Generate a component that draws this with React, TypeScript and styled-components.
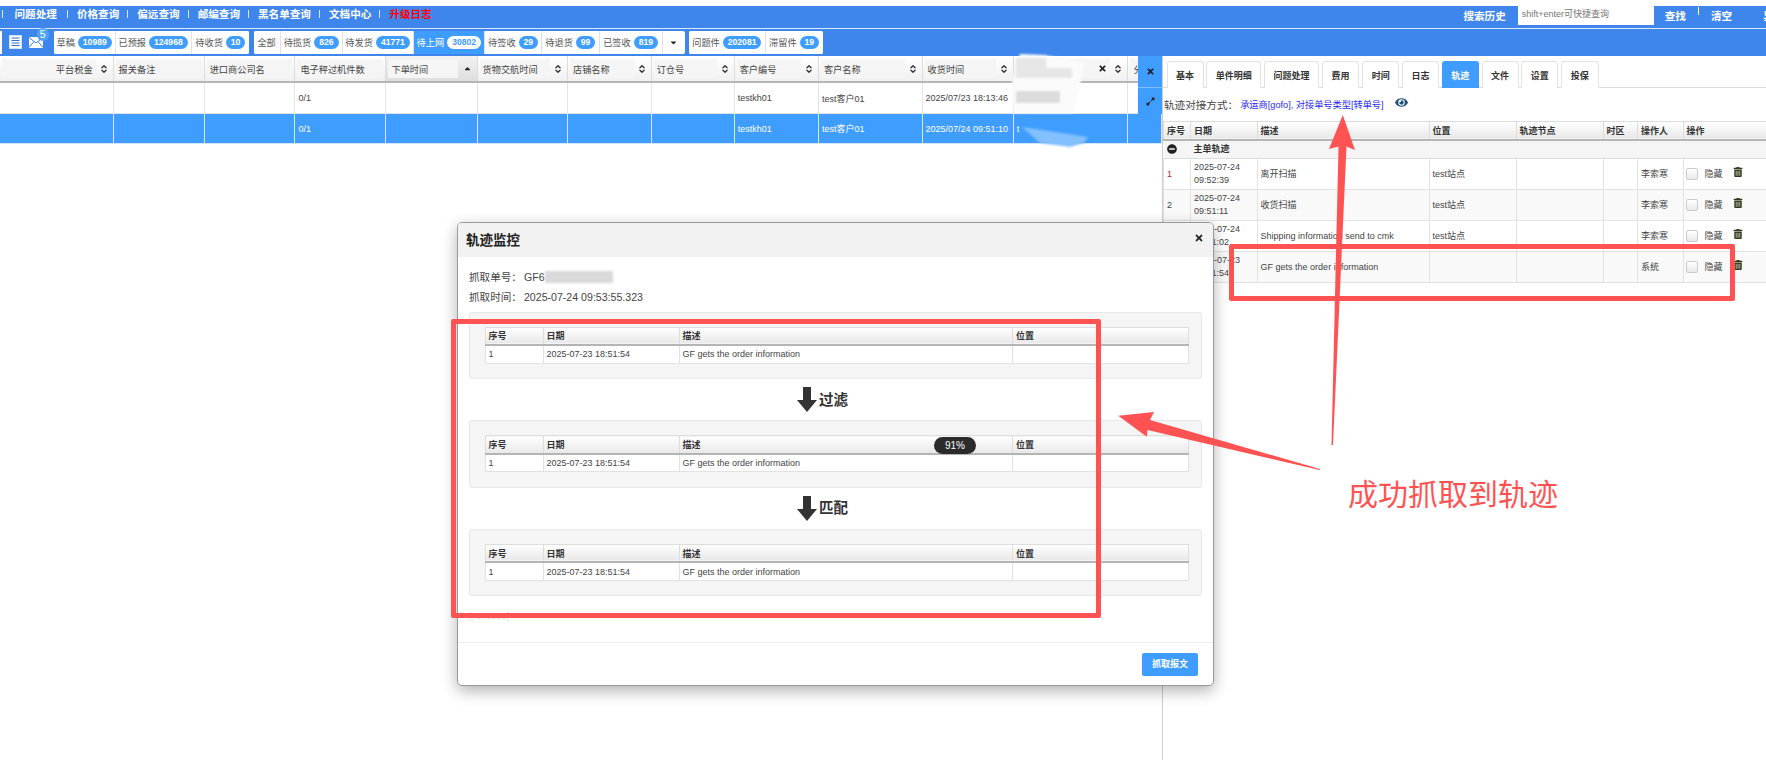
import styled, { createGlobalStyle } from 'styled-components';
import { FaEye, FaMinusCircle, FaTimes, FaTrashAlt, FaExpandAlt, FaCaretDown, FaCaretUp } from 'react-icons/fa';
import { LuChevronsUpDown } from 'react-icons/lu';

const FONT = `"Liberation Sans", "Noto Sans CJK SC", Arial, sans-serif`;
const BLUE = '#3f86ec';
const ACCENT = '#3f9dff';
const RED = '#ff5353';

const GRID_COLS = '113.6px 91.1px 90.7px 91.1px 91.1px 90.4px 83.7px 83px 84.3px 103.6px 91.1px 114.8px 33.5px';

const navLinks = ['问题处理', '价格查询', '偏远查询', '邮编查询', '黑名单查询', '文档中心'];

type TabData = { label: string; count?: string; w: number; active?: boolean };

const statusGroups: TabData[][] = [
  [
    { label: '草稿', count: '10989', w: 62 },
    { label: '已预报', count: '124968', w: 76 },
    { label: '待收货', count: '10', w: 57.5 },
  ],
  [
    { label: '全部', w: 27 },
    { label: '待揽货', count: '826', w: 62 },
    { label: '待发货', count: '41771', w: 71 },
    { label: '待上网', count: '30802', w: 71.5, active: true },
    { label: '待签收', count: '29', w: 57 },
    { label: '待退货', count: '99', w: 57.5 },
    { label: '已签收', count: '819', w: 63 },
  ],
  [
    { label: '问题件', count: '202081', w: 76.5 },
    { label: '滞留件', count: '19', w: 57 },
  ],
];

const gridHeads = [
  { label: '平台税金', right: true, sort: true },
  { label: '报关备注' },
  { label: '进口商公司名' },
  { label: '电子秤过机件数' },
  { label: '下单时间', sorted: true },
  { label: '货物交航时间', sort: true },
  { label: '店铺名称', sort: true },
  { label: '订仓号', sort: true },
  { label: '客户编号', sort: true },
  { label: '客户名称', sort: true },
  { label: '收货时间', sort: true },
  { label: '', sort: true, clear: true },
  { label: '分' },
];

const gridRows = [
  ['', '', '', '0/1', '', '', '', '', 'testkh01', 'test客户01', '2025/07/23 18:13:46', '', ''],
  ['', '', '', '0/1', '', '', '', '', 'testkh01', 'test客户01', '2025/07/24 09:51:10', 't', ''],
];

const tabs = [
  { label: '基本', w: 37.2 },
  { label: '单件明细', w: 55 },
  { label: '问题处理', w: 55 },
  { label: '费用', w: 37.5 },
  { label: '时间', w: 37.5 },
  { label: '日志', w: 37 },
  { label: '轨迹', w: 37, active: true },
  { label: '文件', w: 37 },
  { label: '设置', w: 37 },
  { label: '投保', w: 38 },
];

const trailCols = [27, 66.6, 172, 87, 87, 34.4, 45.6, 83.4];
const trailHeads = ['序号', '日期', '描述', '位置', '轨迹节点', '时区', '操作人', '操作'];
const trailRows = [
  ['1', '2025-07-24', '09:52:39', '离开扫描', 'test站点', '李索寒'],
  ['2', '2025-07-24', '09:51:11', '收货扫描', 'test站点', '李索寒'],
  ['3', '2025-07-24', '09:51:02', 'Shipping information send to cmk', 'test站点', '李索寒'],
  ['4', '2025-07-23', '18:51:54', 'GF gets the order information', '', '系统'],
];

const DataTable = () => (
  <Monitor.Table>
    <colgroup>
      <Monitor.Col $w={58} />
      <Monitor.Col $w={136} />
      <Monitor.Col $w={333.4} />
      <Monitor.Col $w={176} />
    </colgroup>
    <thead>
      <tr>
        <Monitor.Th>序号</Monitor.Th>
        <Monitor.Th>日期</Monitor.Th>
        <Monitor.Th>描述</Monitor.Th>
        <Monitor.Th>位置</Monitor.Th>
      </tr>
    </thead>
    <tbody>
      <tr>
        <Monitor.Td>1</Monitor.Td>
        <Monitor.Td>2025-07-23 18:51:54</Monitor.Td>
        <Monitor.Td>GF gets the order information</Monitor.Td>
        <Monitor.Td />
      </tr>
    </tbody>
  </Monitor.Table>
);

const ArrowDown = () => (
  <svg width="20" height="25" viewBox="0 0 20 25">
    <path d="M6 0h8v13h6L10 25 0 13h6z" fill="#333" />
  </svg>
);

export default function App() {
  return (
    <Page>
      <GlobalStyle />
      <Nav.Bar>
        {navLinks.map((link) => (
          <Nav.Group key={link}>
            <Nav.Sep />
            <Nav.Link>{link}</Nav.Link>
          </Nav.Group>
        ))}
        <Nav.Group>
          <Nav.Sep />
          <Nav.Link $red>升级日志</Nav.Link>
        </Nav.Group>
        <Nav.Right>
          <Nav.Link>搜索历史</Nav.Link>
          <Nav.Search>shift+enter可快捷查询</Nav.Search>
          <Nav.Action>查找</Nav.Action>
          <Nav.TallSep />
          <Nav.Action>清空</Nav.Action>
          <Nav.Clipped>异常</Nav.Clipped>
        </Nav.Right>
      </Nav.Bar>

      <Toolbar.Bar>
        <Toolbar.Stub />
        <Toolbar.Icons>
          <svg width="13" height="14" viewBox="0 0 13 14">
            <rect x="0.5" y="0.5" width="12" height="13" fill="#fff" stroke="#cfe2fb" />
            <path d="M2.5 3h8M2.5 5.5h8M2.5 8h8M2.5 10.5h8" stroke="#2f6fc4" strokeWidth="1.2" />
          </svg>
          <Toolbar.Mail>
            <svg width="14" height="11" viewBox="0 0 14 11">
              <rect width="14" height="11" fill="#fff" />
              <path d="M0 0.5l7 5.5 7-5.5M0 10.5l5-6M14 10.5l-5-6" stroke="#3f86ec" strokeWidth="1" fill="none" />
            </svg>
            <Toolbar.Badge>5</Toolbar.Badge>
          </Toolbar.Mail>
        </Toolbar.Icons>
        {statusGroups.map((group, i) => (
          <Toolbar.Group key={group[0].label}>
            {group.map((tab) => (
              <Toolbar.Tab key={tab.label} $w={tab.w} $active={tab.active}>
                {tab.label}
                {tab.count && <Toolbar.Pill $active={tab.active}>{tab.count}</Toolbar.Pill>}
              </Toolbar.Tab>
            ))}
            {i === 1 && (
              <Toolbar.Caret>
                <FaCaretDown size={9} />
              </Toolbar.Caret>
            )}
          </Toolbar.Group>
        ))}
      </Toolbar.Bar>

      <Main>
        <Grid.Panel>
          <Grid.Head>
            {gridHeads.map((head, i) => (
              <Grid.HeadCell key={i} $sorted={head.sorted}>
                <Grid.Label $right={head.right}>
                  {head.label}
                  {head.clear && <FaTimes size={9} color="#222" />}
                </Grid.Label>
                {head.sort && <Grid.Sort />}
                {head.sorted && (
                  <Grid.SortedMark>
                    <FaCaretUp size={9} />
                  </Grid.SortedMark>
                )}
              </Grid.HeadCell>
            ))}
          </Grid.Head>
          {gridRows.map((row, r) => (
            <Grid.Row key={r} $selected={r === 1}>
              {row.map((cell, c) => (
                <Grid.Cell key={c} $selected={r === 1}>
                  {cell}
                </Grid.Cell>
              ))}
            </Grid.Row>
          ))}
          <Grid.Strip>
            <Grid.StripButton>
              <FaTimes size={9} />
            </Grid.StripButton>
            <Grid.StripButton>
              <FaExpandAlt size={9} />
            </Grid.StripButton>
          </Grid.Strip>
        </Grid.Panel>

        <Side.Panel>
          <Side.Tabs>
            {tabs.map((tab) => (
              <Side.Tab key={tab.label} $w={tab.w} $active={tab.active}>
                {tab.label}
              </Side.Tab>
            ))}
          </Side.Tabs>
          <Side.Info>
            轨迹对接方式：
            <Side.Link>承运商[gofo], 对接单号类型[转单号]</Side.Link>
            <FaEye size={13} color="#1f4e79" />
          </Side.Info>
          <Side.Table>
            <colgroup>
              {trailCols.map((w, i) => (
                <Monitor.Col key={i} $w={w} />
              ))}
            </colgroup>
            <thead>
              <tr>
                {trailHeads.map((head) => (
                  <Side.Th key={head}>{head}</Side.Th>
                ))}
              </tr>
            </thead>
            <tbody>
              <tr>
                <Side.GroupCell>
                  <FaMinusCircle size={10} color="#222" />
                </Side.GroupCell>
                <Side.GroupCell colSpan={7}>
                  <b>主单轨迹</b>
                </Side.GroupCell>
              </tr>
              {trailRows.map((row, i) => (
                <Side.Row key={row[0]} $odd={i % 2 === 1}>
                  <Side.Td $red={i === 0}>{row[0]}</Side.Td>
                  <Side.Td>
                    {row[1]}
                    <br />
                    {row[2]}
                  </Side.Td>
                  <Side.Td>{row[3]}</Side.Td>
                  <Side.Td>{row[4]}</Side.Td>
                  <Side.Td />
                  <Side.Td />
                  <Side.Td>{row[5]}</Side.Td>
                  <Side.Td>
                    <Side.Actions>
                      <Side.Check />
                      隐藏
                      <Side.Trash>
                        <FaTrashAlt size={10} />
                      </Side.Trash>
                    </Side.Actions>
                  </Side.Td>
                </Side.Row>
              ))}
            </tbody>
          </Side.Table>
        </Side.Panel>
      </Main>

      <Monitor.Dialog>
        <Monitor.Header>
          轨迹监控
          <FaTimes size={10} color="#222" />
        </Monitor.Header>
        <Monitor.Body>
          <Monitor.InfoLine>
            抓取单号：<Monitor.Value>GF6</Monitor.Value>
          </Monitor.InfoLine>
          <Monitor.InfoLine>
            抓取时间：<Monitor.Value>2025-07-24 09:53:55.323</Monitor.Value>
          </Monitor.InfoLine>
          <Monitor.Well>
            <DataTable />
          </Monitor.Well>
          <Monitor.Step>
            <ArrowDown />
            <Monitor.StepLabel>过滤</Monitor.StepLabel>
          </Monitor.Step>
          <Monitor.Well>
            <DataTable />
          </Monitor.Well>
          <Monitor.Step>
            <ArrowDown />
            <Monitor.StepLabel>匹配</Monitor.StepLabel>
          </Monitor.Step>
          <Monitor.Well>
            <DataTable />
          </Monitor.Well>
          <Monitor.Faint>[, 240555]</Monitor.Faint>
        </Monitor.Body>
        <Monitor.Footer>
          <Monitor.Button>抓取报文</Monitor.Button>
        </Monitor.Footer>
      </Monitor.Dialog>

      <Progress>91%</Progress>

      <BlurMark />
      <Overlay viewBox="0 0 1766 760">
        <defs>
          <filter id="soft">
            <feGaussianBlur stdDeviation="1.2" />
          </filter>
        </defs>
        <g filter="url(#soft)">
          <path d="M1020 54l24 1 40 8-4 22-6 28h-60l-2-30z" fill="#fbfbfb" />
          <path d="M1016 58h30v10h26v10h-56z" fill="#e6e6e6" />
          <path d="M1016 91h44v12h-44z" fill="#dcdcdc" />
          <path d="M1022 127l66 10-4 6-14 4-30-4z" fill="#82c0ff" />
        </g>
      </Overlay>
      <Annot.Box $x={451} $y={319} $w={650} $h={299} />
      <Annot.Box $x={1229} $y={244} $w={506} $h={57} />
      <Overlay viewBox="0 0 1766 760">
        <path
          d="M1342.8 115L1355 150 1346.5 146.5 1333 445 1331.5 445 1338.5 146.5 1329 149z"
          fill={RED}
        />
        <path
          d="M1118.3 415.7L1154 412 1150 420 1320 469 1319.5 470 1147.5 430 1146.7 436.7z"
          fill={RED}
        />
      </Overlay>
      <Annot.Caption>成功抓取到轨迹</Annot.Caption>
    </Page>
  );
}

const GlobalStyle = createGlobalStyle`
  html, body {
    margin: 0;
    padding: 0;
    background: #fff;
  }
  * {
    box-sizing: border-box;
  }
`;

const Page = styled.div`
  position: relative;
  width: 1766px;
  height: 760px;
  padding-top: 5.5px;
  overflow: hidden;
  background: #fff;
  color: #333;
  font-family: ${FONT};
  font-size: 9px;
`;

const Nav = {
  Bar: styled.div`
    display: flex;
    align-items: center;
    height: 22.5px;
    padding-left: 2px;
    background: ${BLUE};
  `,
  Group: styled.div`
    display: flex;
    align-items: center;
    flex: none;
    padding-bottom: 7px;
    &:first-child {
      margin-right: 2px;
    }
  `,
  Sep: styled.span`
    width: 1px;
    height: 8px;
    margin: 1px 9px 0 0;
    background: #dce9fb;
    div:first-child > & {
      margin-right: 11.5px;
    }
  `,
  Link: styled.span<{ $red?: boolean }>`
    flex: none;
    margin-right: 8px;
    color: ${(p) => (p.$red ? '#f00' : '#fff')};
    font-size: 10.6px;
    font-weight: 700;
    white-space: nowrap;
  `,
  Right: styled.div`
    display: flex;
    align-items: center;
    flex: none;
    margin-left: auto;
    padding-bottom: 3px;
    width: 302.6px;
    height: 100%;
    overflow: hidden;
  `,
  Search: styled.div`
    flex: none;
    width: 136px;
    height: 19px;
    margin: 0 11px 0 4px;
    padding: 0 4px;
    background: #fff;
    color: #777;
    font-size: 9px;
    line-height: 17px;
  `,
  Action: styled.span`
    flex: none;
    color: #fff;
    font-size: 10.6px;
    font-weight: 700;
    white-space: nowrap;
  `,
  TallSep: styled.span`
    flex: none;
    width: 1px;
    height: 8px;
    margin: -8px 12px 0 12px;
    background: #fff;
  `,
  Clipped: styled.span`
    flex: none;
    margin-left: 31px;
    color: #fff;
    font-size: 10.6px;
    font-weight: 700;
    white-space: nowrap;
  `,
};

const Toolbar = {
  Bar: styled.div`
    display: flex;
    align-items: center;
    height: 28px;
    padding-bottom: 1px;
    border-top: 1px solid #dce9fb;
    background: ${BLUE};
  `,
  Stub: styled.div`
    width: 2px;
    height: 23px;
    background: #fff;
  `,
  Icons: styled.div`
    display: flex;
    align-items: center;
    gap: 6.5px;
    width: 51.6px;
    padding-left: 7px;
  `,
  Mail: styled.div`
    position: relative;
    display: flex;
    margin-top: 1px;
  `,
  Badge: styled.span`
    position: absolute;
    top: -9px;
    left: 8px;
    width: 12.5px;
    height: 12.5px;
    border-radius: 50%;
    background: #4da3f5;
    color: #fff;
    font-size: 10.5px;
    line-height: 12.5px;
    text-align: center;
  `,
  Group: styled.div`
    display: flex;
    height: 23px;
    margin-right: 4.5px;
    border-radius: 2px;
    background: #fff;
    overflow: hidden;
  `,
  Tab: styled.div<{ $w: number; $active?: boolean }>`
    display: flex;
    align-items: center;
    justify-content: center;
    gap: 3px;
    width: ${(p) => p.$w}px;
    border-right: 1px solid #e2e2e2;
    background: ${(p) => (p.$active ? ACCENT : '#fff')};
    color: ${(p) => (p.$active ? '#fff' : '#555')};
    font-size: 9.2px;
    white-space: nowrap;
    &:last-child {
      border-right: 0;
    }
  `,
  Pill: styled.span<{ $active?: boolean }>`
    min-width: 13px;
    height: 13px;
    padding: 0 5px;
    border-radius: 7px;
    background: ${(p) => (p.$active ? '#fff' : ACCENT)};
    color: ${(p) => (p.$active ? ACCENT : '#fff')};
    font-size: 8.6px;
    font-weight: 700;
    line-height: 13px;
    text-align: center;
  `,
  Caret: styled.div`
    display: flex;
    align-items: center;
    justify-content: center;
    width: 22px;
    color: #222;
  `,
};

const Main = styled.div`
  display: flex;
  height: 704px;
`;

const Grid = {
  Panel: styled.div`
    position: relative;
    width: 1162px;
    flex: none;
  `,
  Head: styled.div`
    display: grid;
    grid-template-columns: ${GRID_COLS};
    height: 27px;
    border-bottom: 2px solid #b5b5b5;
    background: linear-gradient(#fff, #f0f0f0);
  `,
  HeadCell: styled.div<{ $sorted?: boolean }>`
    display: flex;
    align-items: center;
    gap: 3px;
    padding: 0 2px;
    border-right: 1px solid #dcdcdc;
    overflow: hidden;
    background: ${(p) => (p.$sorted ? 'linear-gradient(#f2f2f2, #dedede)' : 'transparent')};
  `,
  Label: styled.div<{ $right?: boolean }>`
    display: flex;
    flex: 1;
    align-items: center;
    justify-content: ${(p) => (p.$right ? 'flex-end' : 'space-between')};
    min-width: 0;
    height: 19px;
    padding: 0 3px;
    background: #f5f5f5;
    color: #444;
    font-size: 9.2px;
    white-space: nowrap;
    & svg {
      margin-left: auto;
    }
  `,
  Sort: styled(LuChevronsUpDown).attrs({ size: 10, strokeWidth: 3.2 })`
    flex: none;
    color: #333;
    margin-right: 2px;
  `,
  SortedMark: styled.span`
    display: flex;
    flex: none;
    width: 14px;
    justify-content: center;
    color: #222;
  `,
  Row: styled.div<{ $selected?: boolean }>`
    display: grid;
    grid-template-columns: ${GRID_COLS};
    height: ${(p) => (p.$selected ? 30 : 31)}px;
    border-bottom: 1px solid ${(p) => (p.$selected ? '#d6e6f8' : '#e4e4e4')};
    background: ${(p) => (p.$selected ? ACCENT : '#fff')};
  `,
  Cell: styled.div<{ $selected?: boolean }>`
    display: flex;
    align-items: center;
    padding-left: 3px;
    border-right: 1px solid ${(p) => (p.$selected ? '#d4e8ff' : '#e4e4e4')};
    color: ${(p) => (p.$selected ? '#fff' : '#444')};
    font-size: 9px;
    white-space: nowrap;
    overflow: hidden;
  `,
  Strip: styled.div`
    position: absolute;
    top: 0;
    left: 1138px;
    width: 24px;
    height: 58px;
    display: grid;
    grid-template-rows: 31px 1fr;
    background: ${ACCENT};
  `,
  StripButton: styled.div`
    display: flex;
    align-items: center;
    justify-content: center;
    color: #222;
    & + & {
      border-top: 1px solid #7fbcff;
    }
  `,
};

const Side = {
  Panel: styled.div`
    flex: 1;
    min-width: 0;
    padding-top: 5px;
    border-left: 1px solid #ccc;
  `,
  Tabs: styled.div`
    display: flex;
    gap: 2.7px;
    height: 27px;
    padding-left: 3.5px;
    border-bottom: 1px solid #ddd;
  `,
  Tab: styled.div<{ $w: number; $active?: boolean }>`
    display: flex;
    align-items: center;
    justify-content: center;
    width: ${(p) => p.$w}px;
    height: 27px;
    border: 1px solid ${(p) => (p.$active ? ACCENT : '#e3e3e3')};
    border-bottom: 0;
    border-radius: 3px 3px 0 0;
    background: ${(p) => (p.$active ? ACCENT : '#fff')};
    color: ${(p) => (p.$active ? '#fff' : '#333')};
    font-size: 9px;
    font-weight: 700;
  `,
  Info: styled.div`
    display: flex;
    align-items: center;
    height: 32.5px;
    padding-left: 1px;
    color: #444;
    font-size: 10.6px;
    white-space: nowrap;
    & svg {
      margin: -3px 0 0 11px;
    }
  `,
  Link: styled.span`
    margin-left: 2px;
    color: #2a2aee;
    font-size: 9.2px;
  `,
  Table: styled.table`
    width: 603px;
    table-layout: fixed;
    border-collapse: collapse;
    font-size: 9px;
  `,
  Th: styled.th`
    height: 19px;
    padding: 0 3px;
    border: 1px solid #dcdcdc;
    border-bottom: 2px solid #b5b5b5;
    background: linear-gradient(#fff, #e8e8e8);
    color: #333;
    font-weight: 700;
    text-align: left;
  `,
  GroupCell: styled.td`
    height: 18.5px;
    padding: 0 3px;
    border-bottom: 1px solid #ddd;
    background: #f5f5f5;
    line-height: 1;
  `,
  Row: styled.tr<{ $odd?: boolean }>`
    height: 31px;
    background: ${(p) => (p.$odd ? '#f9f9f9' : '#fff')};
  `,
  Td: styled.td<{ $red?: boolean }>`
    padding: 0 3px;
    border: 1px solid #e2e2e2;
    color: ${(p) => (p.$red ? '#a33' : '#444')};
    line-height: 12.7px;
    white-space: nowrap;
    overflow: hidden;
  `,
  Actions: styled.div`
    display: flex;
    align-items: center;
  `,
  Check: styled.span`
    width: 12.5px;
    height: 12.5px;
    margin: 0 6.5px 0 -1px;
    border: 1px solid #ccc;
    border-radius: 2px;
    background: linear-gradient(#fff, #e8e8e8);
  `,
  Trash: styled.span`
    display: flex;
    margin: -3px 0 0 10px;
    color: #2f3a1c;
  `,
};

const Monitor = {
  Dialog: styled.div`
    position: absolute;
    top: 222px;
    left: 457px;
    display: flex;
    flex-direction: column;
    width: 757px;
    height: 464px;
    border: 1px solid #999;
    border-radius: 5px;
    background: #fff;
    box-shadow: 0 5px 15px rgba(0, 0, 0, 0.3);
    overflow: hidden;
  `,
  Header: styled.div`
    display: flex;
    align-items: center;
    justify-content: space-between;
    flex: none;
    height: 34px;
    padding: 0 9px 3px 8px;
    background: #f2f2f2;
    color: #222;
    font-size: 13.5px;
    font-weight: 700;
    & svg {
      margin-top: -1px;
    }
  `,
  Body: styled.div`
    flex: 1;
    padding: 10px 11px 0;
  `,
  InfoLine: styled.div`
    height: 20px;
    color: #444;
    font-size: 10.6px;
    line-height: 20px;
    &:nth-child(2) {
      margin-bottom: 4.7px;
    }
  `,
  Value: styled.span`
    margin-left: 2px;
  `,
  Well: styled.div`
    height: 67.6px;
    padding: 14px 14.5px;
    border: 1px solid #e8e8e8;
    border-radius: 3px;
    background: #f5f5f5;
  `,
  Step: styled.div`
    display: flex;
    align-items: center;
    justify-content: center;
    gap: 2px;
    height: 41px;
    padding-right: 26px;
  `,
  StepLabel: styled.span`
    margin-top: -3px;
    color: #333;
    font-size: 14.5px;
    font-weight: 700;
  `,
  Faint: styled.div`
    margin-top: 15px;
    color: #ddd;
    font-size: 9px;
  `,
  Footer: styled.div`
    display: flex;
    align-items: center;
    justify-content: flex-end;
    flex: none;
    height: 43px;
    padding: 0 15px 0 0;
    border-top: 1px solid #eee;
  `,
  Button: styled.div`
    width: 56px;
    height: 23px;
    border-radius: 2px;
    background: ${ACCENT};
    color: #fff;
    font-size: 9px;
    font-weight: 700;
    line-height: 23px;
    text-align: center;
  `,
  Table: styled.table`
    width: 703.4px;
    table-layout: fixed;
    border-collapse: collapse;
    background: #fff;
    font-size: 9px;
  `,
  Col: styled.col<{ $w: number }>`
    width: ${(p) => p.$w}px;
  `,
  Th: styled.th`
    height: 18px;
    padding: 0 3px;
    border: 1px solid #ddd;
    border-bottom: 2px solid #b5b5b5;
    background: linear-gradient(#fff, #e8e8e8);
    color: #333;
    font-weight: 700;
    text-align: left;
  `,
  Td: styled.td`
    height: 18px;
    padding: 0 3px;
    border: 1px solid #e2e2e2;
    color: #444;
  `,
};

const Progress = styled.div`
  position: absolute;
  top: 437px;
  left: 934px;
  width: 42px;
  height: 17px;
  border-radius: 9px;
  background: #2b2b2b;
  color: #fff;
  font-size: 10px;
  line-height: 17px;
  text-align: center;
`;

const BlurMark = styled.div`
  position: absolute;
  top: 271px;
  left: 545px;
  width: 68px;
  height: 12px;
  background: #d9d9d9;
  filter: blur(1px);
`;

const Overlay = styled.svg`
  position: absolute;
  top: 0;
  left: 0;
  width: 1766px;
  height: 760px;
  pointer-events: none;
`;

const Annot = {
  Box: styled.div<{ $x: number; $y: number; $w: number; $h: number }>`
    position: absolute;
    top: ${(p) => p.$y}px;
    left: ${(p) => p.$x}px;
    width: ${(p) => p.$w}px;
    height: ${(p) => p.$h}px;
    border: 5px solid ${RED};
    border-radius: 2px;
  `,
  Caption: styled.div`
    position: absolute;
    top: 476px;
    left: 1348px;
    color: ${RED};
    font-size: 30px;
    line-height: 38px;
    white-space: nowrap;
  `,
};
